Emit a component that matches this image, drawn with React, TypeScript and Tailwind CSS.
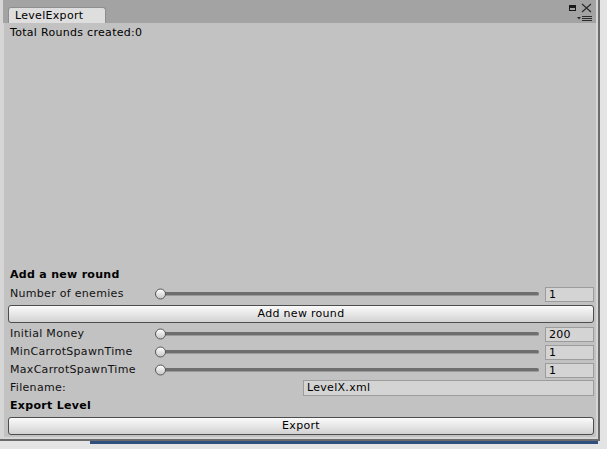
import React from "react";

const Slider: React.FC = () => (
    <div className="relative flex-1 h-full flex items-center">
        <div className="w-full h-[4px] rounded-full bg-[#6e6e6e] border-b border-[#9a9a9a]" />
        <div className="absolute left-0 top-1/2 -translate-y-1/2 w-[11px] h-[11px] rounded-full border border-[#5a5a5a] bg-gradient-to-b from-white to-[#c8c8c8]" />
    </div>
);

const NumField: React.FC<{ value: string }> = ({ value }) => (
    <div className="ml-[6px] w-[49px] h-[15px] bg-[#d4d4d4] border border-[#9c9c9c] pl-[3px] leading-[13px] text-black">
        {value}
    </div>
);

const SliderRow: React.FC<{ label: string; value: string; className?: string }> = ({ label, value, className }) => (
    <div className={"flex items-center h-[16px] " + (className ?? "")}>
        <div className="w-[147px] pl-[2px] whitespace-nowrap">{label}</div>
        <Slider />
        <NumField value={value} />
    </div>
);

const Button: React.FC<{ label: string; className?: string }> = ({ label, className }) => (
    <div
        className={
            "h-[18px] rounded-[3px] border border-[#4d4d4d] bg-gradient-to-b from-[#fbfbfb] to-[#d2d2d2] flex items-center justify-center text-black " +
            (className ?? "")
        }
    >
        {label}
    </div>
);

export default function App() {
    return (
        <div
            className="w-[607px] h-[449px] bg-[#e4e4e4] relative overflow-hidden text-[11px] tracking-[0.3px] text-[#111]"
            style={{ fontFamily: '"DejaVu Sans", Verdana, sans-serif' }}
        >
            <div className="w-[600px] h-[441px] bg-[#d6d6d6] border-r-2 border-b-2 border-[#6b6b6b] flex flex-col">
                {/* title bar */}
                <div className="h-[23px] bg-[#a3a3a3] flex items-end pl-[5px] ml-[3px] mr-[2px] relative">
                    <div className="w-[98px] h-[16px] bg-[#dedede] rounded-t-[3px] border border-b-0 border-[#8e8e8e] pl-[6px] leading-[15px] text-black">
                        LevelExport
                    </div>
                    <div className="absolute right-[20px] top-[5px] w-[7px] h-[6px] border border-[#1a1a1a] border-t-[3px]" />
                    <svg className="absolute right-[4px] top-[3px]" width="11" height="10" viewBox="0 0 11 10">
                        <path d="M1 1 L10 9 M10 1 L1 9" stroke="#2a2a2a" strokeWidth="1.2" fill="none" />
                    </svg>
                    <svg className="absolute right-[3px] top-[15px]" width="16" height="7" viewBox="0 0 16 7">
                        <path d="M0 2 L4 2 L2 4.5 Z" fill="#2a2a2a" />
                        <path d="M5 1.5 H15 M5 3.5 H15 M5 5.5 H15" stroke="#2a2a2a" strokeWidth="1" fill="none" />
                    </svg>
                </div>
                {/* content */}
                <div className="flex-1 ml-[4px] mr-[2px] mb-[2px] bg-[#c2c2c2] flex flex-col pl-[4px] pr-[2px] pb-[2px]">
                    <div className="pl-[2px] mt-[2px] h-[16px] leading-[16px] text-black">Total Rounds created:0</div>
                    <div className="flex-1" />
                    <div className="pl-[2px] h-[16px] leading-[16px] font-bold text-black">Add a new round</div>
                    <SliderRow label="Number of enemies" value="1" className="mt-[3px]" />
                    <Button label="Add new round" className="mt-[3px]" />
                    <SliderRow label="Initial Money" value="200" className="mt-[3px]" />
                    <SliderRow label="MinCarrotSpawnTime" value="1" className="mt-[2px]" />
                    <SliderRow label="MaxCarrotSpawnTime" value="1" className="mt-[2px]" />
                    <div className="flex items-center h-[16px] mt-[2px]">
                        <div className="flex-1 pl-[2px]">Filename:</div>
                        <div className="w-[291px] h-[16px] bg-[#d4d4d4] border border-[#9c9c9c] pl-[3px] leading-[14px] text-black">
                            LevelX.xml
                        </div>
                    </div>
                    <div className="pl-[2px] mt-[2px] h-[16px] leading-[16px] font-bold text-black">Export Level</div>
                    <Button label="Export" className="mt-[3px]" />
                </div>
            </div>
            <div className="absolute left-[90px] right-[9px] bottom-[5px] h-[3px] bg-[#2f4f7f]" />
        </div>
    );
}
